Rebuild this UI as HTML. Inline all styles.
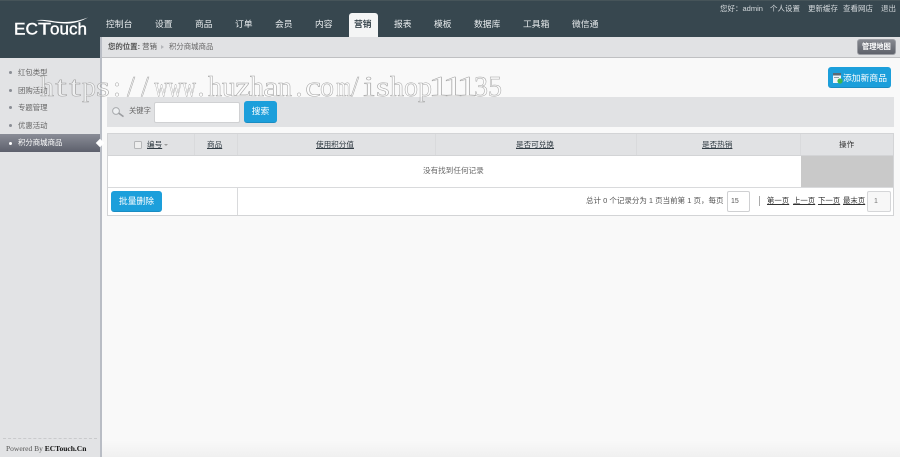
<!DOCTYPE html>
<html lang="zh">
<head>
<meta charset="utf-8">
<title>积分商城商品</title>
<style>
html,body{margin:0;padding:0;width:900px;height:457px;overflow:hidden;background:#f9f9f9}
body{position:relative;font-family:"Liberation Sans","Noto Sans CJK SC",sans-serif;color:#444}
#w{position:absolute;left:0;top:0;width:900px;height:457px;overflow:hidden;background:#f9f9f9;filter:blur(.25px)}
.a{position:absolute}
.t{position:absolute;white-space:nowrap;line-height:12px;height:12px}
.n{color:#e8ecee;font-size:8.8px}
.r{color:#d5dadd;font-size:7.5px}
.s{color:#666;font-size:7.4px;left:18px}
.h{font-size:7.6px;color:#2f3a42;text-decoration:underline}
.blue{position:absolute;background:#1c9fdb;border-radius:3px;border-bottom:1px solid #1a8cc2;box-sizing:border-box;color:#fff;text-align:center}
.dot{position:absolute;left:9px;width:3px;height:3px;border-radius:50%;background:#8a8d94}
.l{position:absolute;background:#d9dadc}
.u{text-decoration:underline;color:#333}
#wm{position:absolute;left:40px;top:72px;white-space:nowrap;font-family:"Liberation Serif",serif;font-size:28px;line-height:32px;color:rgba(255,255,255,.45);-webkit-text-stroke:.5px #a4a4a4}
#wm i{display:inline-block;width:14px;text-align:center;font-style:normal}
#wm i.c{transform:scaleX(.68)}
#wm i.e{transform:scaleX(1.25)}
#wm i.f{transform:scaleX(1.5)}
</style>
</head>
<body>
<div id="w">
<!-- main background bottom fade -->
<div class="a" style="left:102px;top:440px;width:798px;height:17px;background:linear-gradient(#f9f9f9,#f0f0f0)"></div>

<!-- top bar -->
<div class="a" style="left:0;top:0;width:900px;height:37px;background:#37474f"></div>
<div class="a" style="left:0;top:0;width:900px;height:1px;background:#465459"></div>
<div class="a" style="left:0;top:37px;width:100px;height:21px;background:#37474f"></div>

<!-- logo -->
<svg class="a" style="left:10px;top:14px" width="84" height="26" viewBox="0 0 84 26" font-family="Liberation Sans" fill="#fff" stroke="#fff" stroke-width=".4">
<text x="4" y="20.5" font-size="17" textLength="24" lengthAdjust="spacingAndGlyphs">EC</text>
<text x="28" y="20.5" font-size="17" textLength="13" lengthAdjust="spacingAndGlyphs">T</text>
<text x="40" y="20.5" font-size="17" textLength="37" lengthAdjust="spacingAndGlyphs">ouch</text>
<path d="M26 6.5C36 4.5 42 8 54 8C64 8 71 6 78 3.5C71 7.5 63 10 54 9.5C44 9 36 6.5 26 6.5Z" stroke="none"/>
</svg>

<!-- nav -->
<div class="t n" style="left:106px;top:18px">控制台</div>
<div class="t n" style="left:155px;top:18px">设置</div>
<div class="t n" style="left:195px;top:18px">商品</div>
<div class="t n" style="left:235px;top:18px">订单</div>
<div class="t n" style="left:275px;top:18px">会员</div>
<div class="t n" style="left:315px;top:18px">内容</div>
<div class="a" style="left:349px;top:13px;width:29px;height:24px;background:#f4f5f5;border-radius:3px 3px 0 0"></div>
<div class="t n" style="left:354px;top:18px;color:#3a474e;font-weight:bold">营销</div>
<div class="t n" style="left:394px;top:18px">报表</div>
<div class="t n" style="left:434px;top:18px">模板</div>
<div class="t n" style="left:474px;top:18px">数据库</div>
<div class="t n" style="left:523px;top:18px">工具箱</div>
<div class="t n" style="left:572px;top:18px">微信通</div>

<div class="t r" style="left:720px;top:3px">您好：admin</div>
<div class="t r" style="left:770px;top:3px">个人设置</div>
<div class="t r" style="left:808px;top:3px">更新缓存</div>
<div class="t r" style="left:843px;top:3px">查看网店</div>
<div class="t r" style="left:881px;top:3px">退出</div>

<!-- breadcrumb -->
<div class="a" style="left:100px;top:37px;width:800px;height:20px;background:#e1e2e4;border-bottom:1px solid #bfc0c2"></div>
<div class="t" style="left:108px;top:41px;font-size:7.4px;color:#555"><b>您的位置:</b> 营销</div>
<div class="a" style="left:161px;top:45px;width:0;height:0;border-left:3px solid #b4b6ba;border-top:2.5px solid transparent;border-bottom:2.5px solid transparent"></div>
<div class="t" style="left:169px;top:41px;font-size:7.4px;color:#666">积分商城商品</div>
<div class="a" style="left:857px;top:39px;width:39px;height:16px;border-radius:3px;background:linear-gradient(#85888f,#5f626b);border:1px solid #9b9da3;box-sizing:border-box"></div>
<div class="t" style="left:862px;top:41px;font-size:7.2px;color:#fff;font-weight:bold">管理地图</div>

<!-- sidebar -->
<div class="a" style="left:0;top:58px;width:100px;height:399px;background:#e2e3e5"></div>
<div class="a" style="left:100px;top:37px;width:2px;height:420px;background:#b9bdc5"></div>
<div class="dot" style="top:71px"></div><div class="t s" style="top:67px">红包类型</div>
<div class="dot" style="top:89px"></div><div class="t s" style="top:85px">团购活动</div>
<div class="dot" style="top:106px"></div><div class="t s" style="top:102px">专题管理</div>
<div class="dot" style="top:124px"></div><div class="t s" style="top:120px">优惠活动</div>
<div class="a" style="left:0;top:134px;width:100px;height:18px;background:linear-gradient(#8a8d97,#5d606c)"></div>
<div class="dot" style="top:142px;background:#fff"></div>
<div class="t s" style="top:137px;color:#fff">积分商城商品</div>
<div class="a" style="left:97px;top:140px;width:6px;height:6px;background:#fff;transform:rotate(45deg)"></div>
<div class="a" style="left:100px;top:134px;width:2px;height:5px;background:#b9bdc5"></div>
<div class="a" style="left:100px;top:147px;width:2px;height:5px;background:#b9bdc5"></div>
<div class="a" style="left:3px;top:438px;width:94px;border-top:1px dashed #c9cacc"></div>
<div class="t" style="left:6px;top:443px;font-family:'Liberation Serif',serif;font-size:7.5px;color:#555">Powered By <b style="color:#111">ECTouch.Cn</b></div>

<!-- add button -->
<div class="blue" style="left:828px;top:67px;width:63px;height:21px"></div>
<svg class="a" style="left:832px;top:72px" width="11" height="12" viewBox="0 0 11 12">
<rect x="1" y="1" width="8" height="10" fill="#eef3f6"/><rect x="1" y="1" width="8" height="2.5" fill="#5a6a74"/>
<rect x="2" y="5" width="5" height="1" fill="#8fa0aa"/><circle cx="8" cy="9" r="2.6" fill="#3fb54a"/>
</svg>
<div class="t" style="left:843px;top:72px;font-size:8.8px;color:#fff">添加新商品</div>

<!-- search -->
<div class="a" style="left:107px;top:97px;width:787px;height:30px;background:#e1e2e4"></div>
<svg class="a" style="left:111px;top:106px" width="14" height="12" viewBox="0 0 14 12">
<circle cx="5" cy="5" r="3.4" fill="#eef0f2" stroke="#a9abae" stroke-width="1"/>
<path d="M7.8 7.2L12.5 10.6" stroke="#9b9da0" stroke-width="1.6"/>
</svg>
<div class="t" style="left:129px;top:105px;font-size:7.3px;color:#666">关键字</div>
<div class="a" style="left:154px;top:102px;width:86px;height:21px;background:#fff;border:1px solid #d0d1d3;border-radius:2px;box-sizing:border-box"></div>
<div class="blue" style="left:244px;top:101px;width:33px;height:22px;font-size:8.8px;line-height:21px">搜索</div>

<!-- table -->
<div class="a" style="left:107px;top:133px;width:787px;height:83px;background:#fff;border:1px solid #d3d4d6;box-sizing:border-box"></div>
<div class="a" style="left:108px;top:134px;width:785px;height:21px;background:#e1e2e4"></div>
<div class="l" style="left:108px;top:155px;width:785px;height:1px;background:#d3d4d6"></div>
<div class="l" style="left:194px;top:134px;width:1px;height:21px"></div>
<div class="l" style="left:237px;top:134px;width:1px;height:21px"></div>
<div class="l" style="left:435px;top:134px;width:1px;height:21px"></div>
<div class="l" style="left:636px;top:134px;width:1px;height:21px"></div>
<div class="l" style="left:800px;top:134px;width:1px;height:21px"></div>
<div class="a" style="left:134px;top:141px;width:8px;height:8px;background:#eee;border:1px solid #b5b6b8;border-radius:1.5px;box-sizing:border-box"></div>
<div class="t h" style="left:147px;top:139px">编号</div>
<div class="a" style="left:164px;top:144px;width:0;height:0;border-top:2px solid #999;border-left:2px solid transparent;border-right:2px solid transparent"></div>
<div class="t h" style="left:207px;top:139px">商品</div>
<div class="t h" style="left:316px;top:139px">使用积分值</div>
<div class="t h" style="left:516px;top:139px">是否可兑换</div>
<div class="t h" style="left:702px;top:139px">是否热销</div>
<div class="t" style="left:839px;top:139px;font-size:7.6px;color:#333">操作</div>

<div class="a" style="left:801px;top:156px;width:92px;height:31px;background:#c9c9c9"></div>
<div class="t" style="left:423px;top:165px;font-size:7.6px;color:#666">没有找到任何记录</div>
<div class="l" style="left:108px;top:187px;width:785px;height:1px"></div>
<div class="l" style="left:237px;top:188px;width:1px;height:27px"></div>

<div class="blue" style="left:111px;top:191px;width:51px;height:21px;font-size:8.8px;line-height:20px">批量删除</div>
<div class="t" style="left:586px;top:195px;font-size:7.5px;color:#555">总计 0 个记录分为 1 页当前第 1 页，每页</div>
<div class="a" style="left:727px;top:191px;width:23px;height:21px;background:#fff;border:1px solid #cfd0d2;border-radius:2px;box-sizing:border-box"></div>
<div class="t" style="left:731px;top:196px;font-size:7px;color:#555">15</div>
<div class="a" style="left:759px;top:196px;width:1px;height:10px;background:#aaa"></div>
<div class="t u" style="left:767px;top:195px;font-size:7.4px">第一页</div>
<div class="t u" style="left:793px;top:195px;font-size:7.4px">上一页</div>
<div class="t u" style="left:818px;top:195px;font-size:7.4px">下一页</div>
<div class="t u" style="left:843px;top:195px;font-size:7.4px">最末页</div>
<div class="a" style="left:867px;top:191px;width:24px;height:21px;background:#f7f7f7;border:1px solid #d5d6d8;border-radius:2px;box-sizing:border-box"></div>
<div class="t" style="left:874px;top:196px;font-size:7px;color:#777">1</div>

<!-- watermark -->
<div id="wm"><i>h</i><i class="f">t</i><i class="f">t</i><i>p</i><i class="e">s</i><i>:</i><i>/</i><i>/</i><i class="c">w</i><i class="c">w</i><i class="c">w</i><i>.</i><i>h</i><i>u</i><i class="e">z</i><i>h</i><i class="e">a</i><i>n</i><i>.</i><i class="e">c</i><i>o</i><i class="c">m</i><i>/</i><i class="f">i</i><i class="e">s</i><i>h</i><i>o</i><i>p</i><i class="f">1</i><i class="f">1</i><i class="f">1</i><i>3</i><i>5</i></div>
</div>
</body>
</html>
